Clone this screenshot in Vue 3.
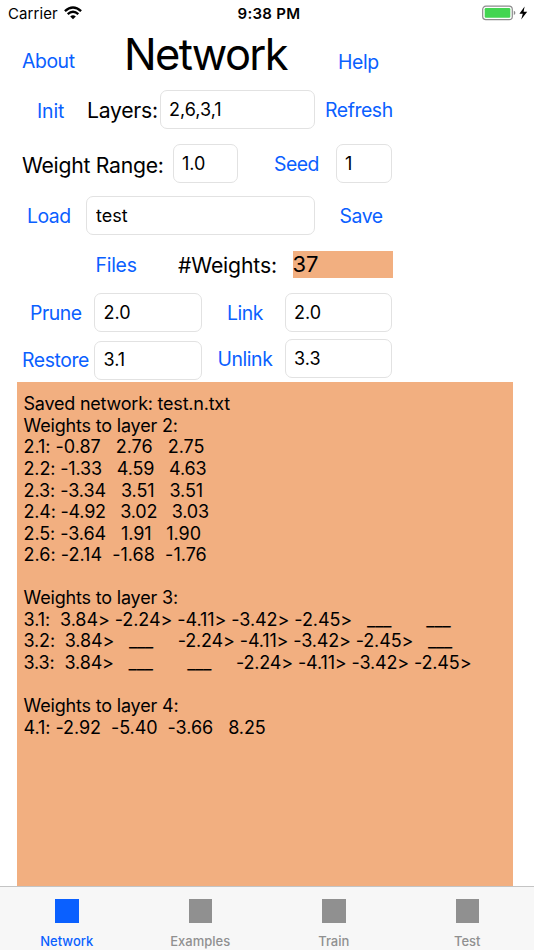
<script setup>
import { ref } from 'vue'

const layers = ref('2,6,3,1')
const range = ref('1.0')
const seed = ref('1')
const file = ref('test')
const prune = ref('2.0')
const restore = ref('3.1')
const link = ref('2.0')
const unlink = ref('3.3')

const output = [
  { text: 'Saved network: test.n.txt', tracking: -0.22 },
  { text: 'Weights to layer 2:', tracking: -0.18 },
  { text: '2.1: -0.87   2.76   2.75', tracking: -0.03 },
  { text: '2.2: -1.33   4.59   4.63', tracking: -0.14 },
  { text: '2.3: -3.34   3.51   3.51', tracking: -0.08 },
  { text: '2.4: -4.92   3.02   3.03', tracking: -0.22 },
  { text: '2.5: -3.64   1.91   1.90', tracking: -0.09 },
  { text: '2.6: -2.14  -1.68  -1.76', tracking: 0.02 },
  { text: '', tracking: 0 },
  { text: 'Weights to layer 3:', tracking: -0.18 },
  { text: '3.1:  3.84> -2.24> -4.11> -3.42> -2.45>   ___       ___', tracking: -0.08 },
  { text: '3.2:  3.84>   ___     -2.24> -4.11> -3.42> -2.45>   ___', tracking: -0.15 },
  { text: '3.3:  3.84>   ___       ___     -2.24> -4.11> -3.42> -2.45>', tracking: -0.15 },
  { text: '', tracking: 0 },
  { text: 'Weights to layer 4:', tracking: -0.18 },
  { text: '4.1: -2.92  -5.40  -3.66   8.25', tracking: -0.06 },
]

const tabs = ['Network', 'Examples', 'Train', 'Test']
const active = ref('Network')
</script>

<template>
  <div class="screen">
    <header class="status">
      <span class="carrier">Carrier</span>
      <svg class="wifi" viewBox="0 0 18 14" width="18" height="14">
        <g fill="none" stroke="#000" stroke-width="2.4">
          <path d="M0.9 5.1Q9-2.1 17.1 5.1" />
          <path d="M3.7 8.1Q9 3.5 14.3 8.1" />
        </g>
        <path d="M6.2 10.5Q9 8.1 11.8 10.5L9 13.3Z" />
      </svg>
      <span class="time">9:38 PM</span>
      <svg class="battery" viewBox="0 0 46 16" width="46" height="16">
        <rect x="0.7" y="1.2" width="29.6" height="13.4" rx="3.2" fill="#fff" stroke="#8c8c8c" stroke-width="1.2" />
        <rect x="2.7" y="3.1" width="25.6" height="9.6" rx="1.2" fill="#43d551" />
        <path d="M31.8 5.7Q33.4 6.3 33.4 7.9T31.8 10.1Z" fill="#8c8c8c" />
        <path d="M42.6 1.6L37.4 8.8H40.8L39.2 14.4L45.2 6.8H41.6Z" fill="#000" />
      </svg>
    </header>

    <main class="form">
      <div class="row row-title">
        <button class="btn about">About</button>
        <h1 class="title">Network</h1>
        <button class="btn help">Help</button>
      </div>
      <div class="row row-layers">
        <button class="btn init">Init</button>
        <label class="label layers-label">Layers:</label>
        <input v-model="layers" class="field layers" />
        <button class="btn refresh">Refresh</button>
      </div>
      <div class="row row-range">
        <label class="label range-label">Weight Range:</label>
        <input v-model="range" class="field range" />
        <button class="btn seed-btn">Seed</button>
        <input v-model="seed" class="field seed" />
      </div>
      <div class="row row-file">
        <button class="btn load">Load</button>
        <input v-model="file" class="field file" />
        <button class="btn save">Save</button>
      </div>
      <div class="row row-count">
        <button class="btn files">Files</button>
        <label class="label count-label">#Weights:</label>
        <output class="count">37</output>
      </div>
      <div class="row row-prune">
        <button class="btn prune-btn">Prune</button>
        <input v-model="prune" class="field left" />
        <button class="btn link-btn">Link</button>
        <input v-model="link" class="field right" />
      </div>
      <div class="row row-restore">
        <button class="btn restore-btn">Restore</button>
        <input v-model="restore" class="field left lower" />
        <button class="btn unlink-btn">Unlink</button>
        <input v-model="unlink" class="field right" />
      </div>
    </main>

    <section class="output">
      <div
        v-for="(line, i) in output"
        :key="i"
        class="line"
        :style="{ letterSpacing: line.tracking + 'px' }"
      >{{ line.text }}</div>
    </section>

    <nav class="tabs">
      <button
        v-for="tab in tabs"
        :key="tab"
        class="tab"
        :class="{ active: tab === active }"
        @click="active = tab"
      >
        <i class="square"></i>
        <span>{{ tab }}</span>
      </button>
    </nav>
  </div>
</template>

<style>
body { margin: 0; background: #fff; }
</style>

<style scoped>
.screen {
  width: 534px;
  height: 950px;
  display: flex;
  flex-direction: column;
  overflow: hidden;
  background: #fff;
  color: #000;
  font-family: Inter, "Liberation Sans", sans-serif;
}
button, input {
  font-family: inherit;
  margin: 0;
  padding: 0;
  border: 0;
  background: none;
  box-sizing: border-box;
  outline: none;
}
.status {
  height: 30px;
  flex: none;
  display: flex;
  align-items: flex-start;
  line-height: 18px;
  white-space: nowrap;
}
.carrier { width: 56px; margin: 5px 0 0 8px; font-size: 15px; letter-spacing: 0.1px; }
.wifi { margin-top: 6px; }
.time { width: 90px; margin: 5px 0 0 155.5px; font-size: 15px; font-weight: 600; letter-spacing: 0.3px; }
.battery { margin: 5px 0 0 154.5px; }

.form { flex: none; }
.row { display: flex; align-items: flex-start; white-space: nowrap; }
.row-title { height: 60px; }
.row-layers { height: 54px; }
.row-range { height: 52px; }
.row-file { height: 54px; }
.row-count { height: 43px; }
.row-prune { height: 46px; }
.row-restore { height: 43px; }

.btn, .label { flex: none; height: 24px; line-height: 24px; text-align: left; white-space: nowrap; }
.btn { font-size: 19.4px; letter-spacing: -0.42px; color: #0a60ff; }
.label { font-size: 21.2px; letter-spacing: -0.27px; }
.field {
  flex: none;
  height: 39px;
  padding: 0 8px 1px;
  border: 1px solid #e2e2e2;
  border-radius: 7px;
  font-size: 18px;
  color: #000;
  background: #fff;
}
.title { margin: 0 0 0 50px; width: 170px; font-size: 43.4px; line-height: 48px; font-weight: 400; letter-spacing: -1.65px; }
.about { width: 52px; margin: 19px 0 0 22px; }
.help { width: 50px; margin: 20px 0 0 44px; }

.init { width: 40px; margin: 9px 0 0 37px; letter-spacing: -0.1px; }
.layers-label { width: 73px; margin: 8px 0 0 10px; }
.layers { width: 155px; }
.refresh { width: 70px; margin: 8px 0 0 10px; }

.range-label { width: 151px; margin: 9px 0 0 22px; }
.range { width: 65px; }
.seed-btn { width: 62px; margin: 8px 0 0 36px; letter-spacing: -0.5px; }
.seed { width: 56px; }

.load { width: 59px; margin: 8px 0 0 27px; letter-spacing: -0.5px; }
.file { width: 229px; padding-left: 9px; }
.save { width: 50px; margin: 8px 0 0 24.5px; letter-spacing: -0.45px; }

.files { width: 60px; margin: 3px 0 0 95.5px; letter-spacing: -0.25px; }
.count-label { width: 110px; margin: 3px 0 0 22.5px; letter-spacing: -0.15px; }
.count { width: 100px; height: 27px; margin: 0.5px 0 0 4.5px; font-size: 22px; line-height: 27px; background: #f2af80; }

.prune-btn { width: 64px; margin: 7.5px 0 0 30px; letter-spacing: -0.45px; }
.restore-btn { width: 72px; margin: 9px 0 0 22px; letter-spacing: -0.4px; }
.left { width: 108px; padding-left: 8.5px; }
.lower { margin-top: 1.5px; }
.link-btn { width: 58px; margin: 7.5px 0 0 25px; letter-spacing: -0.45px; }
.unlink-btn { width: 67.5px; margin: 7.5px 0 0 15.5px; }
.right { width: 107px; }

.output {
  flex: 1;
  margin: 0 21px 0 17px;
  padding: 11.3px 0 0 6.5px;
  background: #f2af80;
  font-size: 18px;
  line-height: 21.57px;
}
.line { height: 21.57px; white-space: pre; }

.tabs {
  flex: none;
  height: 64px;
  box-sizing: border-box;
  border-top: 1px solid #c4c4c4;
  background: #f7f7f7;
  display: grid;
  grid-template-columns: repeat(4, 1fr);
}
.tab {
  display: flex;
  flex-direction: column;
  align-items: center;
  padding-top: 12px;
  gap: 10px;
  color: #909090;
  font-size: 13px;
  font-weight: 500;
  line-height: 16px;
}
.square { width: 23.5px; height: 23.5px; background: currentColor; }
.active { color: #0a60ff; }
</style>
